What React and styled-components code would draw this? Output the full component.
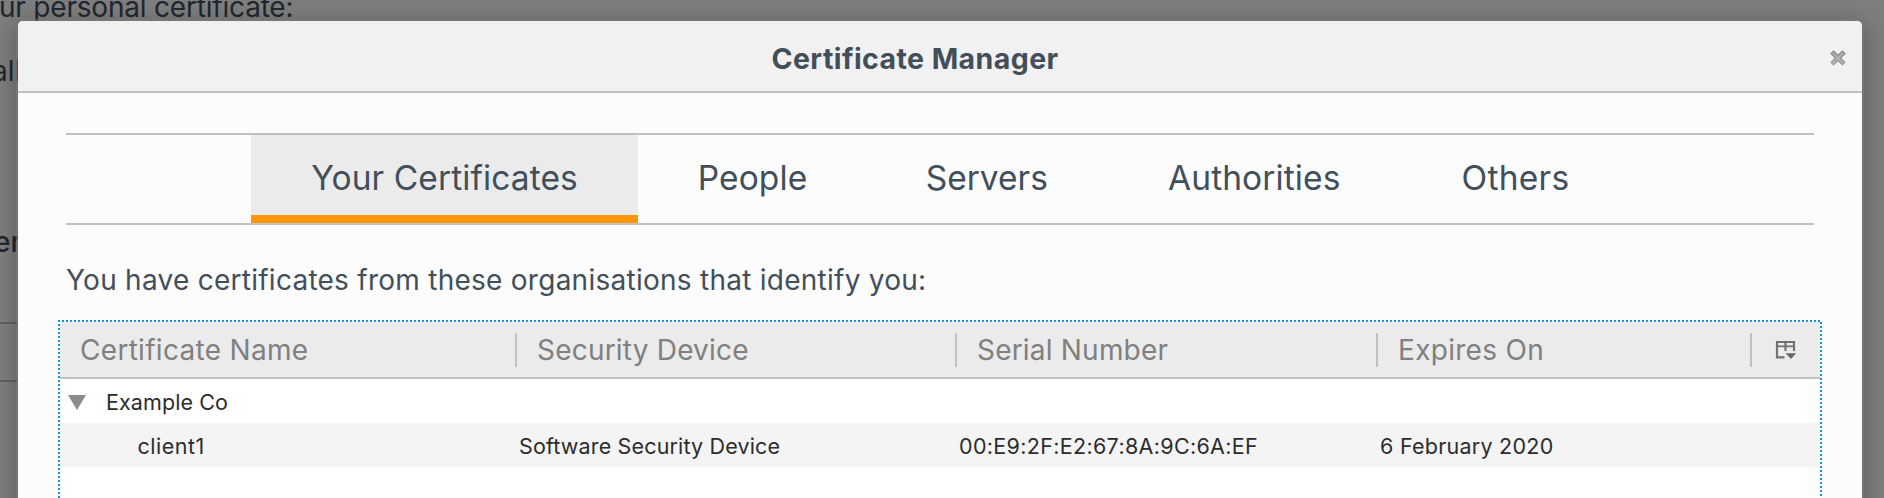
import React from 'react';
import styled, { createGlobalStyle } from 'styled-components';

const GlobalStyle = createGlobalStyle`
  * { box-sizing: border-box; }
  html, body { margin: 0; padding: 0; }
  body {
    overflow: hidden;
    background: #7e7e7e;
    font-family: Inter, "Liberation Sans", sans-serif;
  }
`;

const Stage = styled.div`
  display: grid;
  grid-template: 498px / 1884px;
  width: 1884px;
  height: 498px;
  overflow: hidden;
`;

const Backdrop = styled.div`
  grid-area: 1 / 1;
  display: flex;
  flex-direction: column;
  overflow: hidden;
  background: #7e7e7e;
  color: #21272e;
  font-size: 28px;
`;

const BackdropLine = styled.div`
  flex: none;
  height: 40px;
  line-height: 40px;
  white-space: nowrap;
  margin-top: ${(p) => p.$top}px;
  margin-left: ${(p) => p.$left}px;
  letter-spacing: ${(p) => p.$track || 0}px;
  font-weight: ${(p) => p.$weight || 400};
`;

const BackdropField = styled.div`
  flex: none;
  margin-top: 60px;
  width: 100px;
  height: 60px;
  border: solid #606060;
  border-width: 2px 0;
`;

const Dialog = styled.section`
  grid-area: 1 / 1;
  position: relative;
  display: flex;
  flex-direction: column;
  width: 1844px;
  height: 640px;
  margin: 21px 0 0 18px;
  border-radius: 5px;
  background: #fcfcfc;
  color: #424f5a;
  box-shadow: 0 0 0 2px rgba(125, 125, 125, 0.5), 0 5px 22px 2px rgba(0, 0, 0, 0.3);
`;

const TitleBar = styled.header`
  flex: none;
  display: grid;
  grid-template-columns: 48px 1fr 48px;
  align-items: center;
  height: 72px;
  border-bottom: 2px solid #c1c1c1;
  border-radius: 5px 5px 0 0;
  background: #f1f1f1;
`;

const Title = styled.h1`
  grid-column: 2;
  margin: 0;
  padding: 5px 50px 0 0;
  text-align: center;
  font-size: 28.5px;
  font-weight: 700;
  line-height: 40px;
  letter-spacing: 0.42px;
`;

const CloseButton = styled.button`
  display: flex;
  width: 16px;
  height: 16px;
  margin: 4px 0 0 16px;
  padding: 0;
  border: 0;
  background: none;
`;

const Content = styled.div`
  display: flex;
  flex-direction: column;
  flex: 1;
  padding: 40px 48px 0;
`;

const Tabs = styled.nav`
  display: flex;
  justify-content: center;
  height: 92px;
  border: solid #c1c1c1;
  border-width: 2px 0;
`;

const Tab = styled.button`
  display: flex;
  align-items: center;
  justify-content: center;
  width: ${(p) => p.$width}px;
  height: 88px;
  padding: 5px 0 0;
  border: 0;
  border-bottom: 8px solid ${(p) => (p.$active ? '#ff9500' : 'transparent')};
  background: ${(p) => (p.$active ? '#ebebeb' : 'transparent')};
  color: inherit;
  font: 400 33.5px Inter, "Liberation Sans", sans-serif;
  letter-spacing: ${(p) => p.$track ?? 0.1}px;
  white-space: nowrap;
`;

const Description = styled.p`
  margin: 35px 0 20px;
  height: 40px;
  font-size: 28px;
  line-height: 40px;
  letter-spacing: 0.26px;
`;

/* Square 2px dots on a 4px pitch for the focus ring of the tree. */
const Tree = styled.div`
  flex: 1;
  display: flex;
  flex-direction: column;
  margin: 0 -8px;
  padding: 2px;
  background:
    repeating-linear-gradient(90deg, #0996dc 0 2px, transparent 2px 4px) 0 0 / 1762px 2px no-repeat,
    repeating-linear-gradient(180deg, #0996dc 0 2px, transparent 2px 4px) 0 4px / 2px 100% no-repeat,
    repeating-linear-gradient(180deg, #0996dc 0 2px, transparent 2px 4px) 100% 2px / 2px 100% no-repeat;
`;

const columns = '457px 440px 421px 374px 68px';

const HeaderRow = styled.div`
  display: grid;
  grid-template-columns: ${columns};
  align-items: center;
  height: 57px;
  flex: none;
  border-bottom: 2px solid #c1c1c1;
  background: #ebebeb;
`;

const HeaderCell = styled.div`
  height: 34px;
  padding-left: 20px;
  border-right: 2px solid #c1c1c1;
  color: #808080;
  font-size: 28px;
  line-height: 34px;
  letter-spacing: ${(p) => p.$track}px;
  white-space: nowrap;
`;

const ColumnPicker = styled.div`
  display: flex;
  padding: 1px 0 0 23px;
`;

const Row = styled.div`
  display: grid;
  grid-template-columns: ${columns};
  flex: none;
  height: 44px;
  background: ${(p) => (p.$shaded ? '#f4f4f4' : '#fff')};
  color: #2c2c2c;
  font-size: 21.5px;
  line-height: 42px;
`;

const Cell = styled.div`
  display: flex;
  align-items: center;
  padding: 2px 0 0 ${(p) => p.$indent ?? 2}px;
  letter-spacing: ${(p) => p.$track}px;
  white-space: nowrap;
`;

const Twisty = styled.svg`
  width: 18px;
  height: 15px;
  margin-right: 20px;
`;

const EmptyArea = styled.div`
  flex: 1;
  background: #fff;
`;

const tabs = [
  { label: 'Your Certificates', width: 387, active: true },
  { label: 'People', width: 229 },
  { label: 'Servers', width: 239.5, track: 0 },
  { label: 'Authorities', width: 295.5 },
  { label: 'Others', width: 227, track: 0.3 },
];

const headers = [
  { label: 'Certificate Name', track: 0.3 },
  { label: 'Security Device', track: 0.2 },
  { label: 'Serial Number', track: 0.2 },
  { label: 'Expires On', track: 0.3 },
];

function CloseIcon() {
  return (
    <svg width="16" height="16" viewBox="0 0 16 16">
      <defs>
        <linearGradient id="cross" x1="0" y1="0" x2="0" y2="1">
          <stop offset="0" stopColor="#808080" />
          <stop offset="1" stopColor="#a2a2a2" />
        </linearGradient>
      </defs>
      <path
        d="M3.6 1.1 8 5.5l4.4-4.4 2.5 2.5L10.5 8l4.4 4.4-2.5 2.5L8 10.5l-4.4 4.4-2.5-2.5L5.5 8 1.1 3.6z"
        fill="#b0b0b0"
        stroke="url(#cross)"
        strokeWidth="1.3"
        strokeLinejoin="round"
      />
    </svg>
  );
}

function ColumnPickerIcon() {
  return (
    <svg width="22" height="20" viewBox="0 0 22 20" fill="none" stroke="#727272">
      <path d="M9.5 17.3H2V2h17v9" strokeWidth="2.2" />
      <path d="M10.5 2v9" strokeWidth="2.2" />
      <path d="M2 6.3h17" strokeWidth="1.8" />
      <path d="M10.6 13.2h10.6L15.9 19z" fill="#686868" stroke="none" />
    </svg>
  );
}

export default function App() {
  return (
    <>
      <GlobalStyle />
      <Stage>
        <Backdrop>
          <BackdropLine $top={-13} $left={-1} $track={-0.2}>ur personal certificate:</BackdropLine>
          <BackdropLine $top={24} $left={-8}>all</BackdropLine>
          <BackdropLine $top={131} $left={-6} $weight={500}>er</BackdropLine>
          <BackdropField />
        </Backdrop>
        <Dialog>
          <TitleBar>
            <Title>Certificate Manager</Title>
            <CloseButton aria-label="Close"><CloseIcon /></CloseButton>
          </TitleBar>
          <Content>
            <Tabs>
              {tabs.map((t) => (
                <Tab key={t.label} $width={t.width} $active={t.active} $track={t.track}>{t.label}</Tab>
              ))}
            </Tabs>
            <Description>You have certificates from these organisations that identify you:</Description>
            <Tree>
              <HeaderRow>
                {headers.map((h) => (
                  <HeaderCell key={h.label} $track={h.track}>{h.label}</HeaderCell>
                ))}
                <ColumnPicker><ColumnPickerIcon /></ColumnPicker>
              </HeaderRow>
              <Row>
                <Cell $indent={8} $track={0.1}>
                  <Twisty viewBox="0 0 18 15"><path d="M0 0h18L9 15z" fill="#8c8c8c" /></Twisty>
                  Example Co
                </Cell>
              </Row>
              <Row $shaded>
                <Cell $indent={77.5} $track={0.5}>client1</Cell>
                <Cell $track={0.15}>Software Security Device</Cell>
                <Cell $track={0.33}>00:E9:2F:E2:67:8A:9C:6A:EF</Cell>
                <Cell $track={0.25}>6 February 2020</Cell>
              </Row>
              <EmptyArea />
            </Tree>
          </Content>
        </Dialog>
      </Stage>
    </>
  );
}
